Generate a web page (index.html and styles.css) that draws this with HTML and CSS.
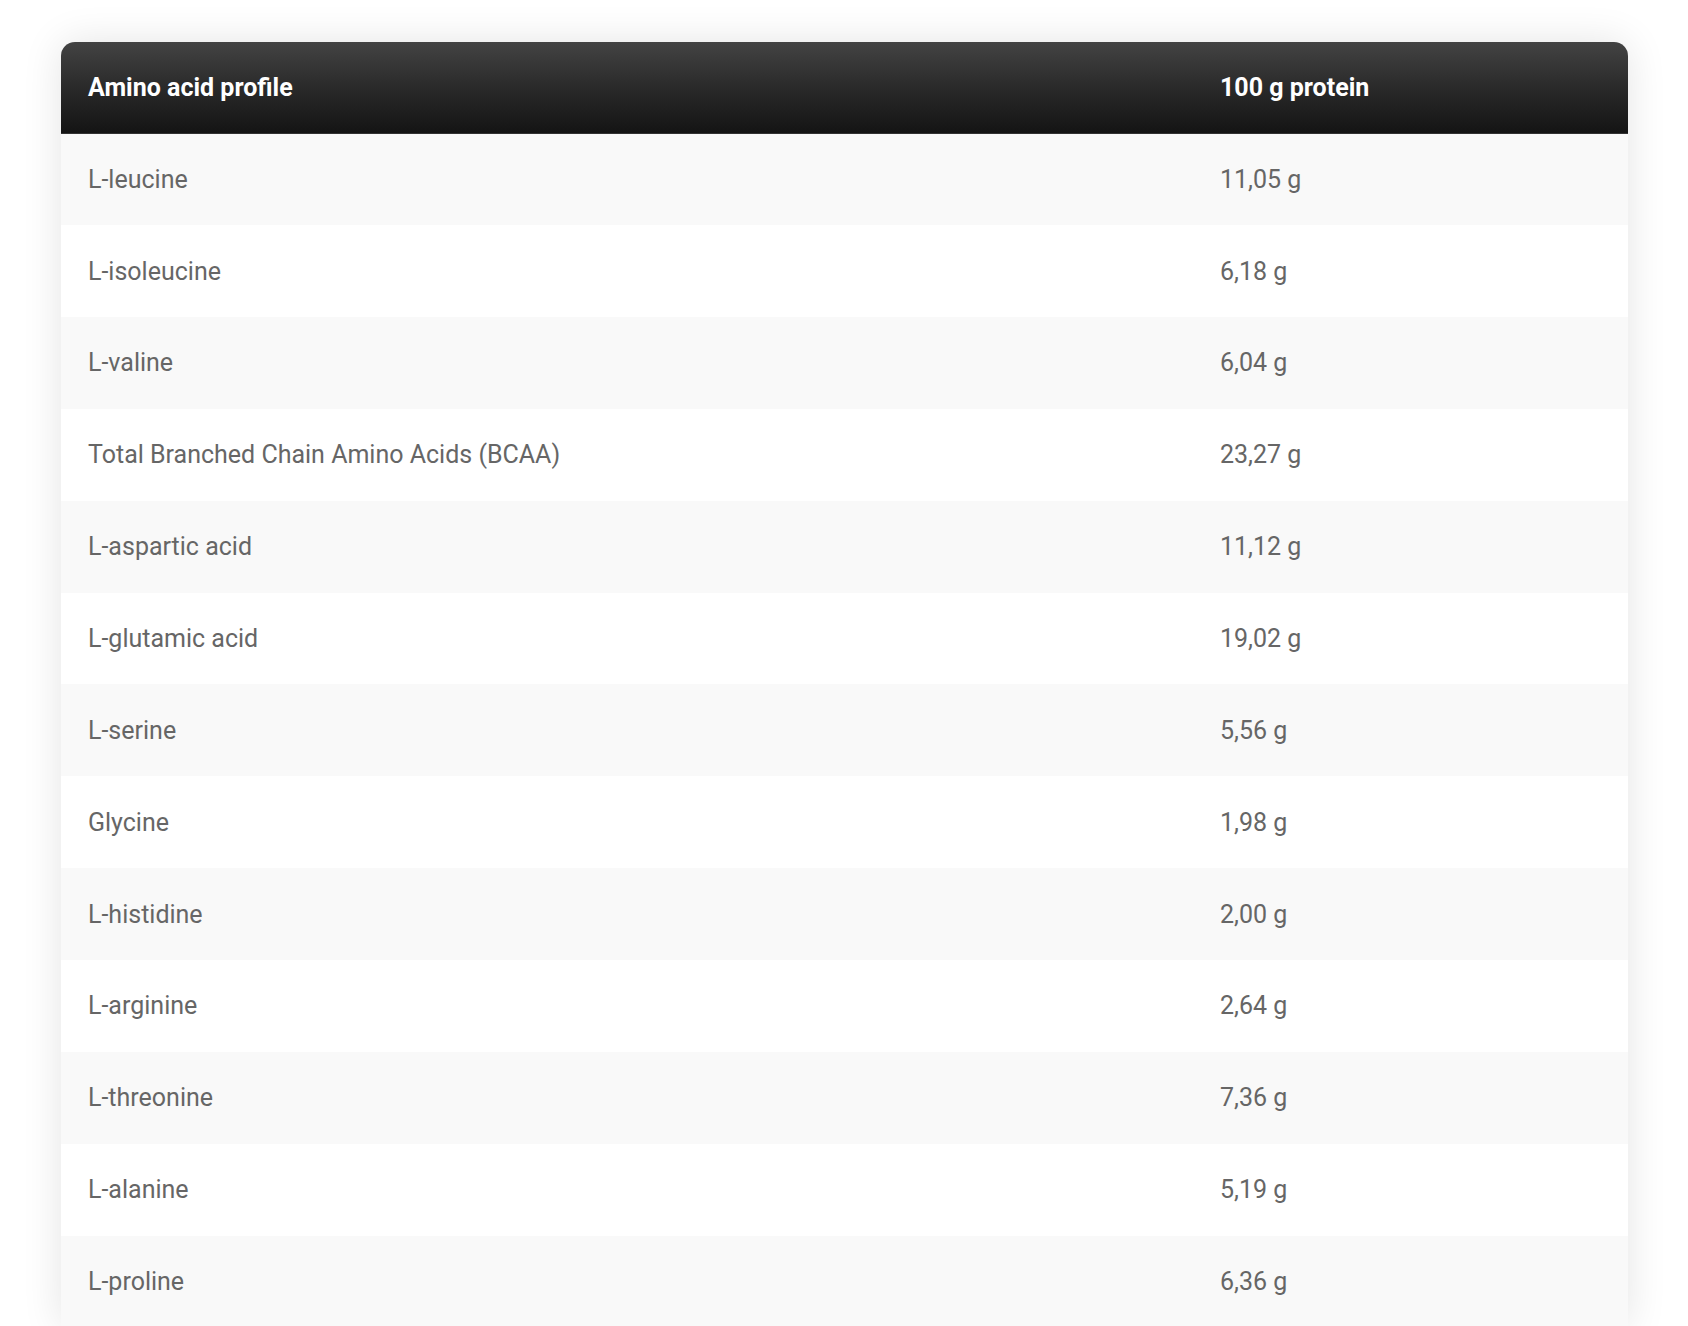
FILE: index.html
```html
<!DOCTYPE html>
<html lang="en">
<head>
<meta charset="utf-8">
<title>Amino acid profile</title>
<link rel="stylesheet" href="styles.css">
</head>
<body>
<div class="page">
  <div class="card">
    <table class="amino">
      <thead>
        <tr><th class="col-name">Amino acid profile</th><th class="col-val">100 g protein</th></tr>
      </thead>
      <tbody>
        <tr><td>L-leucine</td><td>11,05 g</td></tr>
        <tr><td>L-isoleucine</td><td>6,18 g</td></tr>
        <tr><td>L-valine</td><td>6,04 g</td></tr>
        <tr><td>Total Branched Chain Amino Acids (BCAA)</td><td>23,27 g</td></tr>
        <tr><td>L-aspartic acid</td><td>11,12 g</td></tr>
        <tr><td>L-glutamic acid</td><td>19,02 g</td></tr>
        <tr><td>L-serine</td><td>5,56 g</td></tr>
        <tr><td>Glycine</td><td>1,98 g</td></tr>
        <tr><td>L-histidine</td><td>2,00 g</td></tr>
        <tr><td>L-arginine</td><td>2,64 g</td></tr>
        <tr><td>L-threonine</td><td>7,36 g</td></tr>
        <tr><td>L-alanine</td><td>5,19 g</td></tr>
        <tr><td>L-proline</td><td>6,36 g</td></tr>
      </tbody>
    </table>
  </div>
</div>
</body>
</html>
```
FILE: styles.css
```css
html, body {
  margin: 0;
  padding: 0;
  background: #ffffff;
}
body {
  font-family: Roboto, "Liberation Sans", Arial, sans-serif;
}
.page {
  padding: 42px 60px 40px 61px;
}
.card {
  width: 1567px;
  border-radius: 14px 14px 0 0;
  overflow: hidden;
  box-shadow: 0 0 40px rgba(0, 0, 0, 0.11);
  background: #fff;
}
.amino {
  width: 100%;
  border-collapse: collapse;
  table-layout: fixed;
}
.amino th {
  height: 91.3px;
  padding: 0 27px;
  text-align: left;
  font-size: 25px;
  font-weight: 700;
  color: #ffffff;
  background: linear-gradient(to bottom, #434343 0%, #2a2a2a 50%, #141414 100%);
  border-bottom: 1px solid #333;
  box-sizing: border-box;
}
.amino th.col-name {
  width: 1132px;
}
.amino td {
  height: 91.86px;
  padding: 0 27px;
  font-size: 25px;
  font-weight: 400;
  color: #666666;
  box-sizing: border-box;
}
.amino tbody tr:nth-child(odd) {
  background: #f9f9f9;
}
.amino tbody tr:nth-child(even) {
  background: #ffffff;
}
```
